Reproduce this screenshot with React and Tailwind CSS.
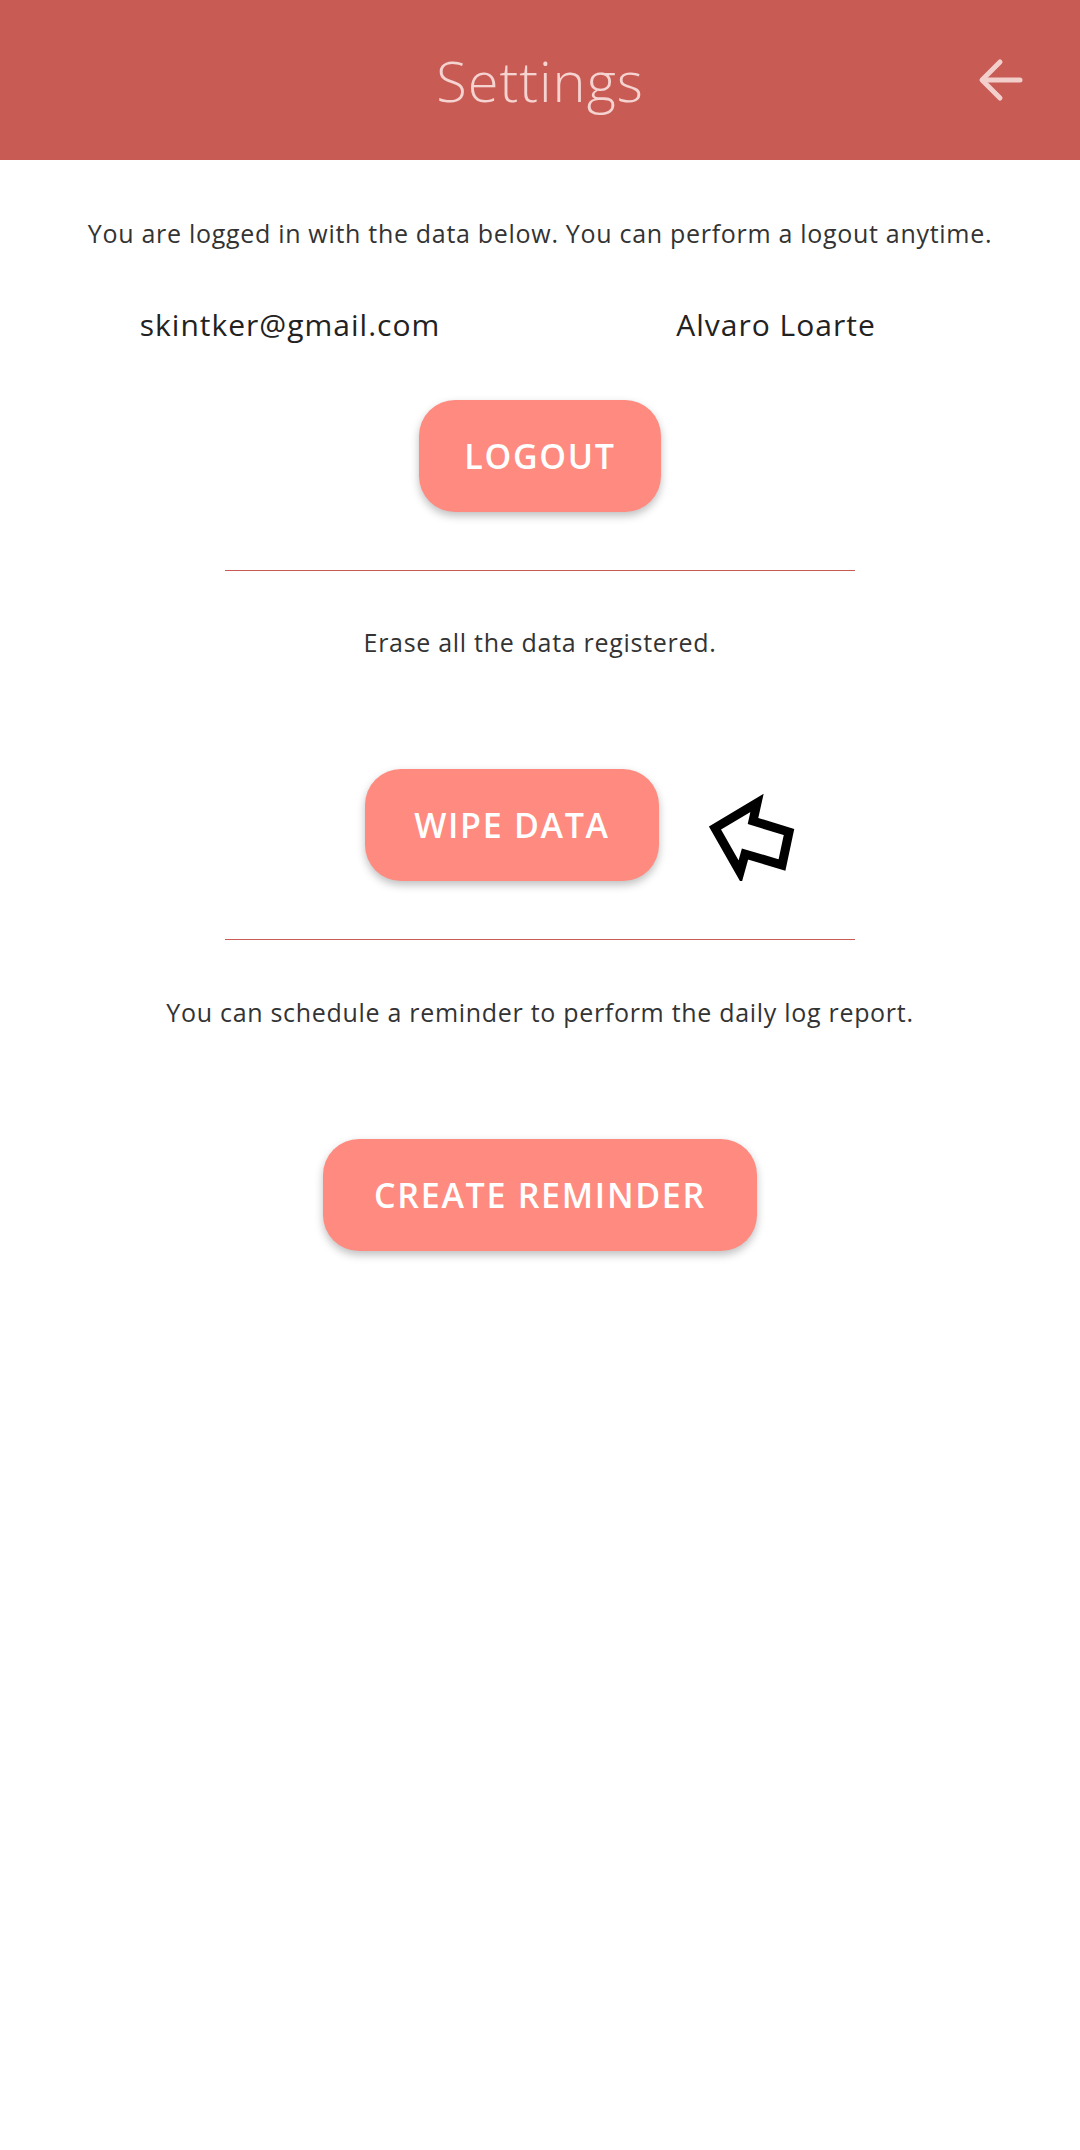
import React from 'react';

const font = { fontFamily: "'Open Sans', 'Liberation Sans', sans-serif" };

const BackArrow = () => (
  <svg width="48" height="48" viewBox="0 0 48 48" fill="none" stroke="#f3cfcc" strokeWidth="5" strokeLinecap="round" strokeLinejoin="round">
    <path d="M5 24H42" />
    <path d="M22 6L4 24L22 42" />
  </svg>
);

const PointerArrow = () => (
  <svg width="100" height="111" viewBox="0 0 100 111" fill="none">
    <polygon
      points="15,58 57,33 53,51 89,62 82,95 45,84 40,102"
      stroke="#000"
      strokeWidth="9"
      strokeLinejoin="miter"
      fill="#fff"
    />
  </svg>
);

const PillButton = ({ children, className = '' }) => (
  <button
    className={`h-[112px] rounded-[36px] bg-[#ff8a80] text-white font-semibold text-[34px] tracking-wider shadow-[0_4px_8px_rgba(0,0,0,0.25)] ${className}`}
    style={font}
  >
    {children}
  </button>
);

const Divider = ({ className = '' }) => (
  <div className={`mx-auto w-[630px] h-px bg-[#c85b53] ${className}`} />
);

export default function App() {
  return (
    <div className="w-[1080px] min-h-[2150px] bg-white" style={font}>
      {/* header */}
      <div className="h-[160px] bg-[#c85b53] grid grid-cols-[1fr_auto_1fr] items-center">
        <div />
        <h1 className="text-[56px] font-light tracking-[1px] text-[#f5d3d0] leading-none">Settings</h1>
        <div className="flex justify-end pr-[54px]">
          <BackArrow />
        </div>
      </div>

      {/* account */}
      <p className="mt-[56px] text-center text-[25px] tracking-[0.7px] leading-[34px] text-[#333]">
        You are logged in with the data below. You can perform a logout anytime.
      </p>
      <div className="mt-[55px] ml-[47px] w-[972px] grid grid-cols-2 text-center text-[30px] tracking-[1px] leading-[40px] text-[#222]">
        <span>skintker@gmail.com</span>
        <span>Alvaro Loarte</span>
      </div>
      <div className="mt-[55px] flex justify-center">
        <PillButton className="w-[242px]">LOGOUT</PillButton>
      </div>

      <Divider className="mt-[58px]" />

      {/* wipe */}
      <p className="mt-[54px] text-center text-[25px] tracking-[0.7px] leading-[34px] text-[#333]">
        Erase all the data registered.
      </p>
      <div className="mt-[110px] flex justify-center items-center pl-[85px] gap-[41px]">
        <PillButton className="w-[294px]">WIPE DATA</PillButton>
        <PointerArrow />
      </div>

      <Divider className="mt-[58px]" />

      {/* reminder */}
      <p className="mt-[55px] text-center text-[25px] tracking-[0.7px] leading-[34px] text-[#333]">
        You can schedule a reminder to perform the daily log report.
      </p>
      <div className="mt-[110px] flex justify-center">
        <PillButton className="w-[434px]">CREATE REMINDER</PillButton>
      </div>
    </div>
  );
}
